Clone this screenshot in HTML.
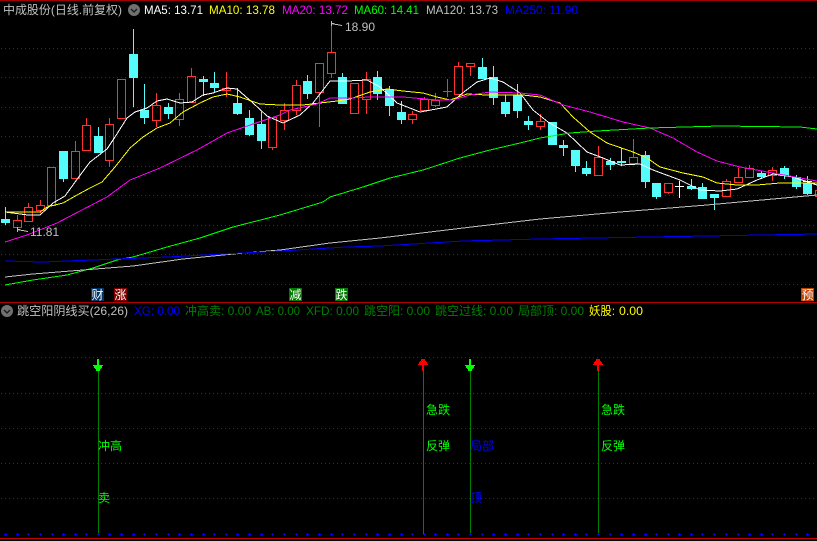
<!DOCTYPE html>
<html>
<head>
<meta charset="utf-8">
<style>
html,body{margin:0;padding:0;background:#000;width:817px;height:541px;overflow:hidden}
svg{display:block;position:absolute;left:0;top:0}
text{font-family:"Liberation Sans","WenQuanYi Zen Hei","Noto Sans CJK SC",sans-serif;font-size:12px}
</style>
</head>
<body>
<svg width="817" height="541" viewBox="0 0 817 541" xmlns="http://www.w3.org/2000/svg">
<defs>
<pattern id="d" x="1" y="0" width="4" height="1" patternUnits="userSpaceOnUse"><rect width="1" height="1" fill="#a00000"/></pattern>
</defs>
<rect width="817" height="541" fill="#000"/>
<g shape-rendering="crispEdges">
<rect x="0" y="0" width="817" height="1" fill="#a00000"/>
<rect x="0" y="302" width="817" height="1" fill="#b00000"/>
<rect x="0" y="538" width="817" height="1" fill="#c00000"/>
<!-- grid -->
<g fill="url(#d)">
<rect y="48" width="817" height="1"/><rect y="77" width="817" height="1"/><rect y="107" width="817" height="1"/><rect y="136" width="817" height="1"/><rect y="166" width="817" height="1"/><rect y="195" width="817" height="1"/><rect y="225" width="817" height="1"/><rect y="254" width="817" height="1"/><rect y="284" width="817" height="1"/><rect y="357" width="817" height="1"/><rect y="393" width="817" height="1"/><rect y="428" width="817" height="1"/><rect y="463" width="817" height="1"/><rect y="498" width="817" height="1"/>
</g>
<!-- cyan wicks -->
<path fill="none" stroke="#54fcfc" d="M5.5 207V225M63.5 151V182M98.5 127V153M133.5 29V107M144.5 84V124M168.5 103V119M203.5 76V96M214.5 72V93M237.5 88V115M249.5 110V136M261.5 112V149M307.5 75V99M342.5 73V104M377.5 71V100M389.5 86V116M401.5 101V124M482.5 58V79M493.5 66V105M505.5 95V117M517.5 84V118M528.5 116V130M563.5 140V156M575.5 150V172M586.5 161V176M610.5 158V170M621.5 148V166M645.5 151V188M656.5 183V199M691.5 179V190M702.5 183V199M714.5 194V210M761.5 171V179M784.5 166V179M796.5 175V189M807.5 176V195"/>
<!-- cyan bodies -->
<path fill="#54fcfc" d="M1 219h9v4h-9zM59 151h9v28h-9zM94 136h9v17h-9zM129 54h9v24h-9zM140 110h9v8h-9zM164 107h9v7h-9zM199 79h9v3h-9zM210 83h9v5h-9zM233 103h9v11h-9zM245 118h9v17h-9zM257 124h9v17h-9zM303 81h9v13h-9zM338 77h9v27h-9zM373 77h9v17h-9zM385 89h9v17h-9zM397 112h9v8h-9zM478 67h9v12h-9zM489 77h9v21h-9zM501 102h9v12h-9zM513 95h9v16h-9zM524 121h9v4h-9zM548 122h9v23h-9zM559 145h9v3h-9zM571 150h9v16h-9zM582 168h9v6h-9zM606 161h9v4h-9zM617 161h9v2h-9zM641 155h9v27h-9zM652 183h9v14h-9zM687 186h9v3h-9zM698 187h9v12h-9zM710 194h9v4h-9zM757 173h9v4h-9zM780 168h9v8h-9zM792 177h9v10h-9zM803 183h9v11h-9z"/>
<!-- red wicks -->
<path fill="none" stroke="#ff3232" d="M17.5 215V220M17.5 227V230M28.5 203V207M40.5 200V205M40.5 210V213M75.5 141V151M86.5 118V125M109.5 118V124M109.5 160V167M156.5 93V105M156.5 120V127M179.5 93V99M179.5 119V126M191.5 68V76M226.5 72V97M272.5 147V150M284.5 103V110M284.5 120V130M296.5 80V85M296.5 110V115M319.5 92V127M331.5 23V52M331.5 73V78M366.5 72V79M366.5 99V114M412.5 111V114M412.5 119V124M424.5 97V99M435.5 93V100M435.5 105V107M447.5 79V97M458.5 62V66M470.5 66V76M540.5 114V121M540.5 126V130M598.5 146V157M633.5 139V157M668.5 192V194M726.5 179V181M738.5 168V177M749.5 165V168M772.5 167V170M772.5 175V181"/>
<!-- red bodies -->
<path fill="none" stroke="#ff3232" d="M13.5 220.5h8v7h-8zM24.5 207.5h8v14h-8zM36.5 205.5h8v5h-8zM47.5 167.5h8v38h-8zM71.5 151.5h8v27h-8zM82.5 125.5h8v25h-8zM105.5 124.5h8v36h-8zM117.5 79.5h8v39h-8zM152.5 105.5h8v15h-8zM175.5 99.5h8v20h-8zM187.5 76.5h8v26h-8zM222.5 88.5h8v2h-8zM268.5 117.5h8v30h-8zM280.5 110.5h8v10h-8zM292.5 85.5h8v25h-8zM315.5 63.5h8v29h-8zM327.5 52.5h8v21h-8zM350.5 83.5h8v30h-8zM362.5 79.5h8v20h-8zM408.5 114.5h8v5h-8zM420.5 99.5h8v11h-8zM431.5 100.5h8v5h-8zM443 91.5h9M454.5 66.5h8v28h-8zM466.5 63.5h8v3h-8zM536.5 121.5h8v5h-8zM594.5 157.5h8v18h-8zM629.5 157.5h8v6h-8zM664.5 183.5h8v9h-8zM722.5 181.5h8v15h-8zM734.5 177.5h8v5h-8zM745.5 168.5h8v9h-8zM768.5 170.5h8v5h-8zM815.5 190.5h8v6h-8z"/>
<path fill="none" stroke="#ffffff" d="M675 186.5h9M679.5 181V198M803 181.5h9"/>
<!-- MA lines -->
<polyline fill="none" stroke="#ffffff" points="5,212 28,215 40,215 53,203 65,196 78,178 90,162 107,149 115,137 127,118 135,112 147,108 157,101 167,99 180,103 192,102 203,95 213,93 227,88 237,89 253,103 267,116 283,123 300,115 313,103 330,81 347,81 367,80 380,87 397,103 420,112 447,107 460,95 477,82 490,78 503,82 520,93 533,110 548,122 567,133 587,152 603,158 620,165 640,164 653,170 680,180 700,190 720,191 737,189 757,180 773,174 793,177 817,185"/>
<polyline fill="none" stroke="#ffff00" points="5,212 40,212 47,207 63,203 77,195 90,188 102,182 115,167 130,148 143,137 157,128 170,123 183,112 200,103 213,97 227,94 240,97 260,104 280,105 303,105 320,103 337,101 350,99 370,92 387,89 403,91 423,93 437,97 450,100 467,94 487,95 523,95 540,97 560,103 573,117 590,132 607,143 633,152 647,158 660,167 683,173 703,177 717,183 737,185 757,185 780,183 817,183"/>
<polyline fill="none" stroke="#ff00ff" points="5,242 27,235 57,223 82,210 107,197 130,180 160,168 197,150 227,133 253,124 280,115 290,110 317,104 330,98 350,98 370,97 403,97 437,100 453,100 470,95 490,92 520,93 540,95 563,105 590,112 623,122 650,128 673,138 697,152 717,161 740,167 773,173 817,181"/>
<polyline fill="none" stroke="#00ff00" points="5,285 33,280 67,275 93,268 117,260 133,257 167,247 200,238 233,227 280,215 323,202 330,197 363,187 390,178 423,170 460,158 490,150 520,143 540,138 570,133 597,131 650,128 720,126 800,127 817,129"/>
<polyline fill="none" stroke="#c0c0c0" points="5,277 33,274 83,270 133,266 183,259 233,254 280,250 330,243 380,238 430,232 480,226 540,219 620,212 707,205 817,195"/>
<polyline fill="none" stroke="#0000ff" points="5,261 43,262 93,260 167,257 280,251 313,249 347,247 380,246 430,243 463,241 540,239 650,237 817,234"/>
<path fill="none" stroke="#c0c0c0" d="M331 23.5L342 25.5M331 23.5h3M331.5 21V26M17 229.5L28 231.5M17 229.5h3M17.5 227V232"/>
<!-- badges -->
<rect x="91" y="288" width="13" height="13" fill="#003366"/>
<rect x="114" y="288" width="13" height="13" fill="#800000"/>
<rect x="289" y="288" width="13" height="13" fill="#007a00"/>
<rect x="335" y="288" width="13" height="13" fill="#007a00"/>
<rect x="801" y="288" width="13" height="13" fill="#c04000"/>
<!-- vertical signal lines -->
<path fill="none" stroke="#008000" d="M98.5 371V534M423.5 371V534M470.5 371V534M598.5 371V534"/>
<!-- arrows -->
<path fill="#00ff00" d="M97 359h2v6h-2zM93 365h10v1h-10zM94 366h8v2h-8zM95 368h6v1h-6zM96 369h4v2h-4zM469 359h2v6h-2zM465 365h10v1h-10zM466 366h8v2h-8zM467 368h6v1h-6zM468 369h4v2h-4z"/>
<path fill="#ff0000" d="M422 365h2v6h-2zM418 364h10v1h-10zM419 362h8v2h-8zM420 361h6v1h-6zM421 359h4v2h-4zM597 365h2v6h-2zM593 364h10v1h-10zM594 362h8v2h-8zM595 361h6v1h-6zM596 359h4v2h-4z"/>
<!-- blue crosses at bottom -->
<path fill="none" stroke="#0000ff" d="M4 534.5h3M5.5 533v3M16 534.5h3M17.5 533v3M27 534.5h3M28.5 533v3M39 534.5h3M40.5 533v3M51 534.5h3M52.5 533v3M62 534.5h3M63.5 533v3M74 534.5h3M75.5 533v3M85 534.5h3M86.5 533v3M97 534.5h3M98.5 533v3M108 534.5h3M109.5 533v3M120 534.5h3M121.5 533v3M132 534.5h3M133.5 533v3M143 534.5h3M144.5 533v3M155 534.5h3M156.5 533v3M167 534.5h3M168.5 533v3M178 534.5h3M179.5 533v3M190 534.5h3M191.5 533v3M202 534.5h3M203.5 533v3M213 534.5h3M214.5 533v3M225 534.5h3M226.5 533v3M236 534.5h3M237.5 533v3M248 534.5h3M249.5 533v3M260 534.5h3M261.5 533v3M271 534.5h3M272.5 533v3M283 534.5h3M284.5 533v3M295 534.5h3M296.5 533v3M306 534.5h3M307.5 533v3M318 534.5h3M319.5 533v3M330 534.5h3M331.5 533v3M341 534.5h3M342.5 533v3M353 534.5h3M354.5 533v3M365 534.5h3M366.5 533v3M376 534.5h3M377.5 533v3M388 534.5h3M389.5 533v3M400 534.5h3M401.5 533v3M411 534.5h3M412.5 533v3M423 534.5h3M424.5 533v3M434 534.5h3M435.5 533v3M446 534.5h3M447.5 533v3M457 534.5h3M458.5 533v3M469 534.5h3M470.5 533v3M481 534.5h3M482.5 533v3M492 534.5h3M493.5 533v3M504 534.5h3M505.5 533v3M516 534.5h3M517.5 533v3M527 534.5h3M528.5 533v3M539 534.5h3M540.5 533v3M551 534.5h3M552.5 533v3M562 534.5h3M563.5 533v3M574 534.5h3M575.5 533v3M585 534.5h3M586.5 533v3M597 534.5h3M598.5 533v3M609 534.5h3M610.5 533v3M620 534.5h3M621.5 533v3M632 534.5h3M633.5 533v3M644 534.5h3M645.5 533v3M655 534.5h3M656.5 533v3M667 534.5h3M668.5 533v3M678 534.5h3M679.5 533v3M690 534.5h3M691.5 533v3M701 534.5h3M702.5 533v3M713 534.5h3M714.5 533v3M725 534.5h3M726.5 533v3M737 534.5h3M738.5 533v3M748 534.5h3M749.5 533v3M760 534.5h3M761.5 533v3M771 534.5h3M772.5 533v3M783 534.5h3M784.5 533v3M795 534.5h3M796.5 533v3M806 534.5h3M807.5 533v3"/>
</g>
<!-- header icons -->
<circle cx="134" cy="10" r="6" fill="#707070"/>
<path d="M131 9l3 3 3-3" fill="none" stroke="#1a1a1a" stroke-width="1.3"/>
<circle cx="7" cy="311" r="6" fill="#707070"/>
<path d="M4 310l3 3 3-3" fill="none" stroke="#1a1a1a" stroke-width="1.3"/>
<!-- header text -->
<text x="3" y="14" fill="#c0c0c0" textLength="119" lengthAdjust="spacingAndGlyphs">中成股份(日线.前复权)</text>
<text x="144" y="14" fill="#ffffff" textLength="59" lengthAdjust="spacingAndGlyphs">MA5: 13.71</text>
<text x="209" y="14" fill="#ffff00" textLength="66" lengthAdjust="spacingAndGlyphs">MA10: 13.78</text>
<text x="282" y="14" fill="#ff00ff" textLength="66" lengthAdjust="spacingAndGlyphs">MA20: 13.72</text>
<text x="354" y="14" fill="#00ff00" textLength="65" lengthAdjust="spacingAndGlyphs">MA60: 14.41</text>
<text x="426" y="14" fill="#c0c0c0" textLength="72" lengthAdjust="spacingAndGlyphs">MA120: 13.73</text>
<text x="505" y="14" fill="#0000ff" textLength="73" lengthAdjust="spacingAndGlyphs">MA250: 11.90</text>
<text x="345" y="31" fill="#c0c0c0">18.90</text>
<text x="30" y="236" fill="#c0c0c0">11.81</text>
<!-- badges text -->
<g font-size="12">
<text x="91.5" y="299" fill="#ffffff">财</text>
<text x="114.5" y="299" fill="#ffffff">涨</text>
<text x="289.5" y="299" fill="#ffffff">减</text>
<text x="335.5" y="299" fill="#ffffff">跌</text>
<text x="801.5" y="299" fill="#ffffff">预</text>
</g>
<!-- indicator header -->
<text x="17" y="315" fill="#c0c0c0" textLength="111" lengthAdjust="spacingAndGlyphs">跳空阳阴线买(26,26)</text>
<text x="134" y="315" fill="#0000ff" textLength="46" lengthAdjust="spacingAndGlyphs">XG: 0.00</text>
<text x="185" y="315" fill="#008000" textLength="66" lengthAdjust="spacingAndGlyphs">冲高卖: 0.00</text>
<text x="256" y="315" fill="#008000" textLength="44" lengthAdjust="spacingAndGlyphs">AB: 0.00</text>
<text x="306" y="315" fill="#008000" textLength="53" lengthAdjust="spacingAndGlyphs">XFD: 0.00</text>
<text x="364" y="315" fill="#008000" textLength="66" lengthAdjust="spacingAndGlyphs">跳空阳: 0.00</text>
<text x="435" y="315" fill="#008000" textLength="78" lengthAdjust="spacingAndGlyphs">跳空过线: 0.00</text>
<text x="518" y="315" fill="#008000" textLength="66" lengthAdjust="spacingAndGlyphs">局部顶: 0.00</text>
<text x="589" y="315" fill="#ffff00" textLength="26" lengthAdjust="spacingAndGlyphs">妖股:</text>
<text x="619" y="315" fill="#ffff00" textLength="24" lengthAdjust="spacingAndGlyphs">0.00</text>
<!-- signal labels -->
<text x="98" y="450" fill="#00ff00">冲高</text>
<text x="98" y="502" fill="#00ff00">卖</text>
<text x="426" y="414" fill="#00ff00">急跌</text>
<text x="426" y="450" fill="#00ff00">反弹</text>
<text x="470" y="450" fill="#0000ff">局部</text>
<text x="470" y="502" fill="#0000ff">顶</text>
<text x="601" y="414" fill="#00ff00">急跌</text>
<text x="601" y="450" fill="#00ff00">反弹</text>
</svg>
</body>
</html>
